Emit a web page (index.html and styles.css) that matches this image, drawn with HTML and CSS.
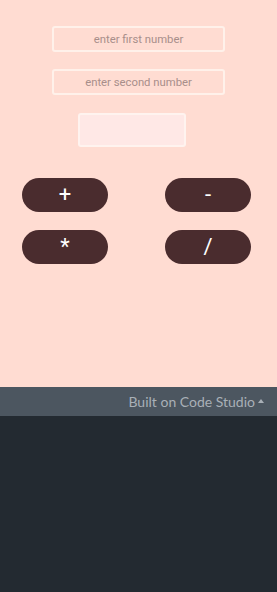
FILE: index.html
```html
<!DOCTYPE html>
<html>
<head>
<meta charset="utf-8">
<link rel="stylesheet" href="styles.css">
</head>
<body>
<div class="app">
  <input class="field first" type="text" placeholder="enter first number">
  <input class="field second" type="text" placeholder="enter second number">
  <div class="result"></div>
  <div class="ops">
    <button class="op">+</button>
    <button class="op">-</button>
    <button class="op">*</button>
    <button class="op">/</button>
  </div>
</div>
<div class="footer">
  <span class="built">Built on Code Studio</span><span class="caret"></span>
</div>
<div class="rest"></div>
</body>
</html>
```
FILE: styles.css
```css
html, body {
  margin: 0;
  padding: 0;
}
body {
  background: #232a31;
  font-family: Roboto, "Noto Sans", sans-serif;
}
.app {
  height: 387px;
  background: #ffdcd2;
  display: flex;
  flex-direction: column;
  align-items: flex-start;
  box-sizing: border-box;
  padding-top: 26px;
}
.field {
  box-sizing: border-box;
  width: 173px;
  height: 26px;
  margin: 0 0 0 52px;
  border: 2px solid #fff1ea;
  border-radius: 3px;
  background: #ffdcd2;
  text-align: center;
  font-family: Roboto, sans-serif;
  font-size: 11.3px;
  color: #8a6e6a;
  outline: none;
  padding: 0;
}
.field::placeholder {
  color: #a88e8a;
}
.second {
  margin-top: 17px;
}
.result {
  box-sizing: border-box;
  width: 108px;
  height: 34px;
  margin-top: 18px;
  margin-left: 78px;
  border: 2px solid #fff3ef;
  border-radius: 3px;
  background: #ffe8e6;
}
.ops {
  margin-top: 31px;
  margin-left: 22px;
  width: 229px;
  display: grid;
  grid-template-columns: 86px 86px;
  justify-content: space-between;
  row-gap: 18px;
}
.op {
  height: 34px;
  border: none;
  border-radius: 17px;
  background: #4a2c2e;
  color: #ffffff;
  font-family: Roboto, sans-serif;
  font-size: 22px;
  padding: 0;
  line-height: 34px;
}
.footer {
  height: 29px;
  background: #4c5660;
  display: flex;
  justify-content: flex-end;
  align-items: center;
  padding-right: 13px;
  color: #a9b0b7;
  font-family: Lato, sans-serif;
  font-size: 14px;
  letter-spacing: 0;
}
.caret {
  width: 0;
  height: 0;
  border-left: 3.5px solid transparent;
  border-right: 3.5px solid transparent;
  border-bottom: 4px solid #a9b0b7;
  margin-left: 3px;
  margin-top: -1px;
}
.rest {
  height: 176px;
}
```
